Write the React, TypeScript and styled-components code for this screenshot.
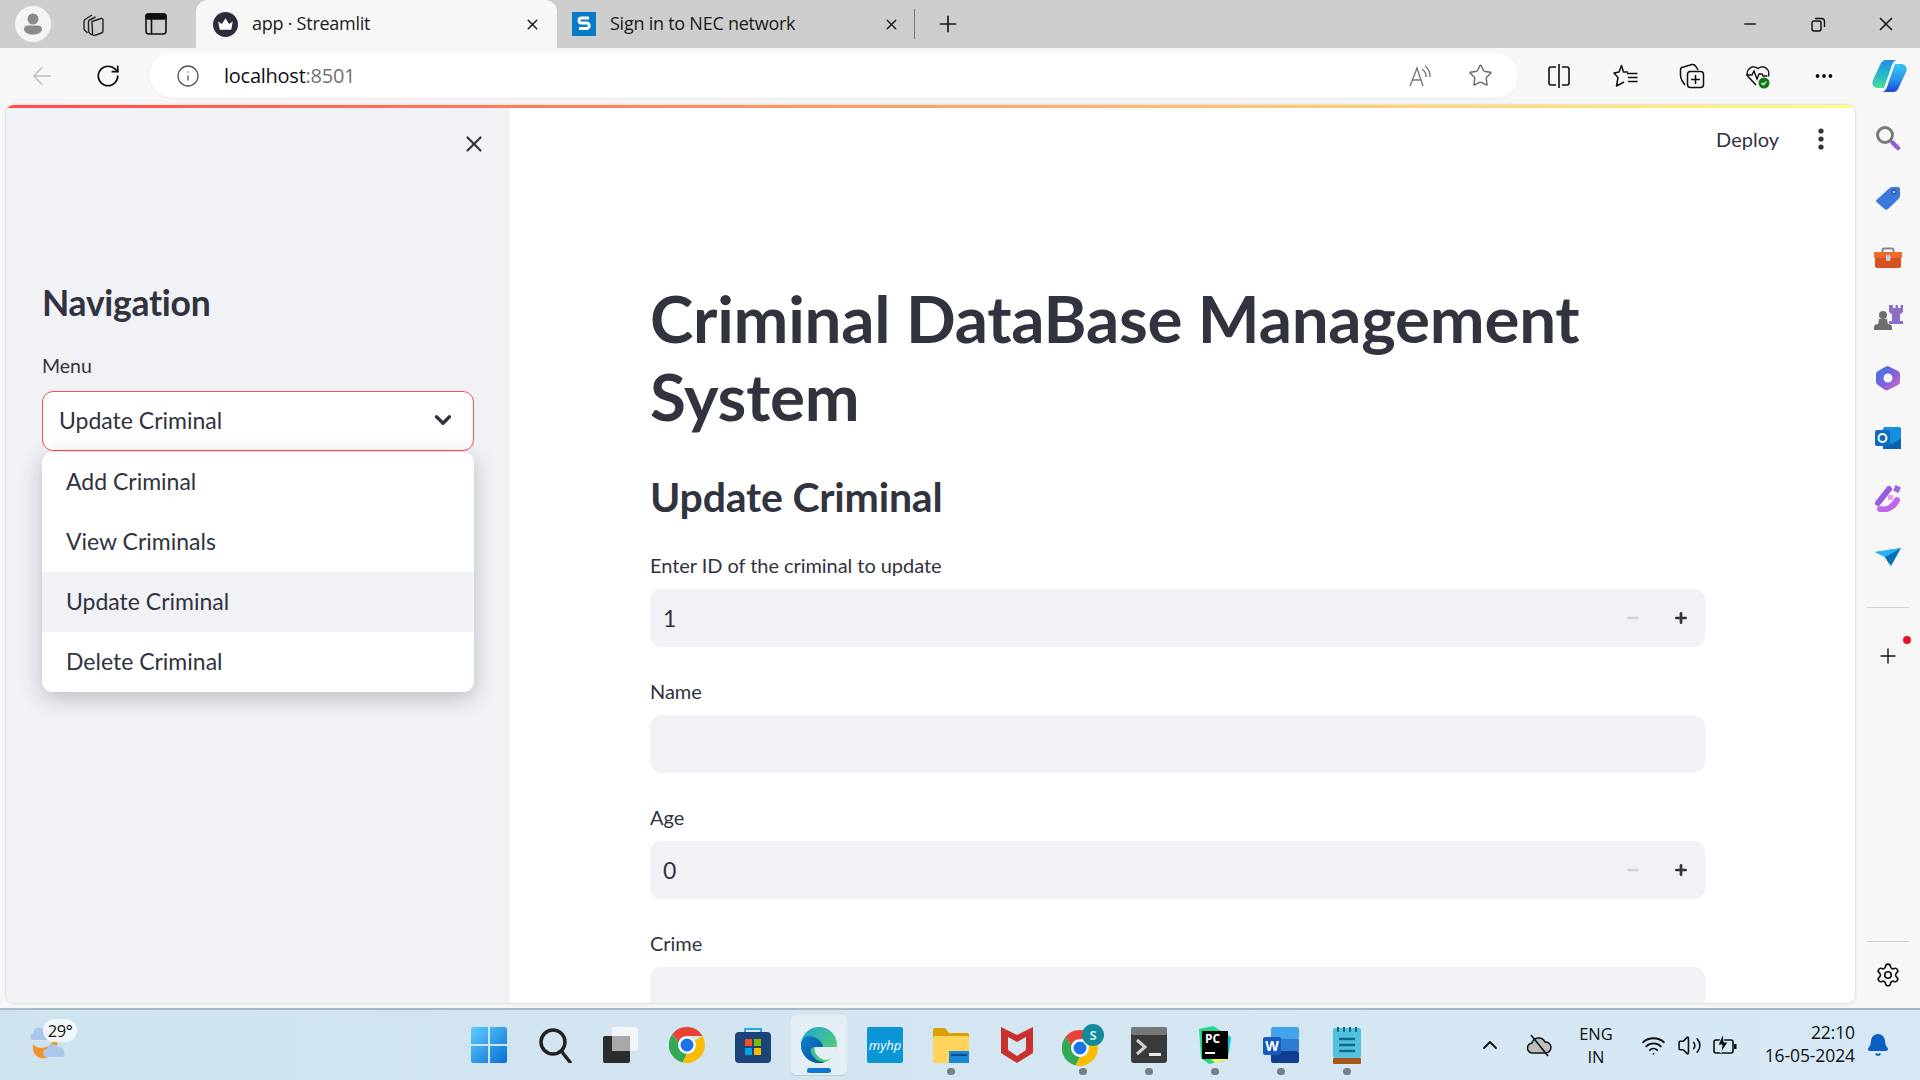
import React from "react";
import styled, { createGlobalStyle } from "styled-components";
import { ArrowLeft, Bell, ChevronDown, ChevronUp, Info, Minus, MoreHorizontal, Plus, RotateCw, Settings, Star, Volume2, Wifi, X } from "lucide-react";

const Global = createGlobalStyle`
  html, body { margin: 0; padding: 0; background: #f7f7f7; }
  * { box-sizing: border-box; }
`;
const Screen = styled.div`
  width: 1920px; height: 1080px; overflow: hidden; display: flex; flex-direction: column;
  font-family: "Lato", "Liberation Sans", sans-serif; color: #31333f; background: #f7f7f7;
`;
const TabStrip = styled.div`
  height: 48px; flex: none; background: #cdcdcd; display: flex; align-items: center; padding-left: 15px;
  font-family: "Open Sans", sans-serif; color: #1a1a1a;
`;
const Slot = styled.div<{ $ml?: number; $w?: number }>`
  display: flex; align-items: center; justify-content: center; flex: none;
  margin-left: ${p => p.$ml ?? 0}px; width: ${p => (p.$w ? `${p.$w}px` : "auto")};
`;
const Tab = styled.div<{ $active?: boolean; $w: number; $ml?: number; $pl: number; $pr: number }>`
  width: ${p => p.$w}px; height: 48px; flex: none; display: flex; align-items: center;
  margin-left: ${p => p.$ml ?? 0}px; padding: 0 ${p => p.$pr}px 0 ${p => p.$pl}px; gap: 14px;
  background: ${p => (p.$active ? "#f7f7f7" : "transparent")};
  border-radius: 12px 12px 0 0;
`;
const TabTitle = styled.span`
  flex: 1; font-size: 18px; line-height: 46px; height: 48px; letter-spacing: -0.25px; white-space: nowrap;
`;
const TabSep = styled.div`
  width: 1px; height: 30px; background: #777; margin-left: 11px; flex: none;
`;
const WindowControls = styled.div`
  margin-left: auto; display: flex;
`;
const Toolbar = styled.div`
  height: 56px; flex: none; background: #f7f7f7; display: flex; align-items: center; padding-left: 24px;
`;
const AddressBar = styled.div`
  width: 1368px; height: 45px; margin-left: 24px; background: #fff; border-radius: 22px; flex: none;
  display: flex; align-items: center; padding: 0 8px 0 26px; margin-top: -1px;
  box-shadow: 0 1px 2px rgba(0,0,0,.05);
`;
const Url = styled.span`
  margin-left: 24px; font-family: "Open Sans", sans-serif; font-size: 20px; letter-spacing: -0.25px; color: #111; flex: 1;
  span { color: #707070; }
`;
const Body = styled.div`
  flex: 1; min-height: 0; display: flex;
`;
const PageFrame = styled.div`
  width: 1849px; margin: 1px 0 5px 6px; flex: none; background: #fff; border-radius: 8px; overflow: hidden;
  position: relative; display: flex; flex-direction: column; box-shadow: 0 0 3px rgba(0,0,0,.22);
`;
const Decoration = styled.div`
  height: 3px; flex: none; background: linear-gradient(90deg, #ff4b4b, #fffd80);
`;
const Columns = styled.div`
  flex: 1; min-height: 0; display: flex;
`;
const Sidebar = styled.aside`
  width: 504px; flex: none; background: #f0f2f6; padding: 0 36px; position: relative;
`;
const SidebarClose = styled.div`
  display: flex; justify-content: flex-end; padding-top: 23px; margin-right: -13px; color: #31333f;
`;
const NavHeading = styled.h2`
  margin: 123px 0 0; font-size: 35.5px; line-height: 46px; font-weight: 700; letter-spacing: -0.3px;
`;
const MenuLabel = styled.div`
  margin: 26px 0 0; font-size: 19.5px; line-height: 28px;
`;
const SelectWrap = styled.div`
  position: relative; margin-top: 11px;
`;
const SelectBox = styled.div`
  height: 60px; background: #fff; border: 1.5px solid #ff4b4b; border-radius: 11px; display: flex; align-items: center;
  padding: 0 17px 2px 16px; font-size: 23px; justify-content: space-between;
`;
const Dropdown = styled.div`
  position: absolute; top: 61px; left: 0; right: 0; background: #fff; border-radius: 11px; overflow: hidden;
  box-shadow: 0 6px 22px rgba(40,45,60,.28);
`;
const Option = styled.div<{ $active?: boolean }>`
  height: 60px; display: flex; align-items: center; padding: 0 0 2px 24px; font-size: 23px;
  background: ${p => (p.$active ? "#f0f2f6" : "#fff")};
`;
const Main = styled.main`
  flex: 1; min-width: 0; padding: 0 150px 0 140px; overflow: hidden; position: relative;
`;
const MainHeader = styled.header`
  position: absolute; top: 19px; right: 29px; display: flex; align-items: center; gap: 37px; font-size: 20px;
`;
const Title = styled.h1`
  margin: 171px 0 0; font-size: 65.5px; line-height: 78px; font-weight: 700; letter-spacing: -0.25px; width: 1000px;
`;
const SubTitle = styled.h2`
  margin: 33px 0 0; font-size: 41px; line-height: 58px; font-weight: 700; letter-spacing: -0.2px;
`;
const Fields = styled.div`
  margin-top: 25px; display: flex; flex-direction: column;
`;
const Field = styled.div`
  height: 126px; display: flex; flex-direction: column;
`;
const FieldLabel = styled.label`
  font-size: 20px; line-height: 28px; height: 38px; letter-spacing: -0.05px;
`;
const Input = styled.div`
  height: 58px; background: #f0f2f6; border-radius: 11px; display: flex; align-items: center; padding-left: 13px; font-size: 23px; flex: none;
`;
const Steppers = styled.div`
  margin-left: auto; display: flex;
`;
const StepSlot = styled.div<{ $muted?: boolean }>`
  width: 48px; display: flex; justify-content: center; color: ${p => (p.$muted ? "#cdd1db" : "#31333f")};
`;
const Rail = styled.nav`
  flex: 1; display: flex; flex-direction: column; align-items: center; padding-top: 4px; position: relative;
`;
const RailItem = styled.div<{ $mt?: number }>`
  height: 60px; width: 100%; flex: none; display: flex; align-items: center; justify-content: center; position: relative;
  margin-top: ${p => p.$mt ?? 0}px;
`;
const RailRule = styled.div<{ $mt?: number }>`
  width: 42px; height: 1px; background: #cfcfcf; flex: none; margin-top: ${p => p.$mt ?? 0}px;
`;
const RedDot = styled.div`
  position: absolute; width: 8px; height: 8px; border-radius: 50%; background: #e81123; right: 9px; top: 10px;
`;
const RailSpacer = styled.div`
  flex: 1;
`;
const RailFoot = styled.div`
  height: 66px; width: 100%; flex: none; display: flex; align-items: center; justify-content: center;
`;
const Taskbar = styled.footer`
  height: 72px; flex: none; background: linear-gradient(90deg, #cfe3ee, #d6e8f3); border-top: 2px solid #a9b9c2;
  display: flex; align-items: center; position: relative; padding-left: 30px;
`;
const Weather = styled.div`
  width: 48px; height: 44px; position: relative; flex: none; margin-top: -10px;
`;
const TempBadge = styled.div`
  position: absolute; left: 13px; top: 1px; width: 34px; height: 23px; border-radius: 12px; background: rgba(244,248,250,.92);
  font-family: "Open Sans", sans-serif; font-size: 16.5px; letter-spacing: -0.4px; line-height: 23px; text-align: center; color: #111;
`;
const Apps = styled.div`
  margin-left: 378px; display: flex; align-items: center; margin-top: -1px;
`;
const AppSlot = styled.div<{ $active?: boolean }>`
  width: 66px; height: 60px; display: flex; align-items: center; justify-content: center; position: relative; flex: none;
  ${p => p.$active ? `&::before { content: ""; position: absolute; left: 5px; right: 5px; top: 0; bottom: 0; background: #e4eff5; border-radius: 5px; box-shadow: 0 1px 0 #b9cbd6; }` : ""}
  svg { position: relative; }
`;
const RunDot = styled.i<{ $on?: boolean }>`
  position: absolute; left: 50%; transform: translateX(-50%);
  width: ${p => (p.$on ? "24px" : "8px")}; height: ${p => (p.$on ? "5px" : "7px")}; border-radius: 4px;
  background: ${p => (p.$on ? "#0a78d4" : "#777f85")}; bottom: ${p => (p.$on ? "2px" : "0")};
`;
const Tray = styled.div`
  position: absolute; right: 0; top: 0; bottom: 0; width: 465px; display: flex; align-items: center; color: #111;
  font-family: "Open Sans", sans-serif;
`;
const Lang = styled.div`
  font-size: 16.5px; line-height: 23px; text-align: center; width: 50px; margin-left: 10px; flex: none;
`;
const Clock = styled.div`
  font-size: 17.5px; line-height: 23px; letter-spacing: -0.1px; text-align: right; width: 100px; margin-left: 12px; flex: none; white-space: nowrap; margin-top: -2px;
  display: flex; flex-direction: column; align-items: flex-end;
`;

const Crown = () => (
  <svg width="25" height="25" viewBox="0 0 24 24"><circle cx="12" cy="12" r="12" fill="#2b2d3a"/><path d="M5 9l3.5 2.5L12 6l3.5 5.5L19 9l-1.5 8h-11z" fill="#fff"/></svg>
);
const SFav = () => (
  <svg width="24" height="24" viewBox="0 0 24 24"><rect width="24" height="24" fill="#0a7cc7"/><path d="M17 6H9.5a2 2 0 0 0 0 5h5a2.2 2.2 0 0 1 0 5.5H7" fill="none" stroke="#fff" strokeWidth="3"/></svg>
);
const Avatar = () => (
  <svg width="36" height="36" viewBox="0 0 36 36"><circle cx="18" cy="18" r="18" fill="#f4f4f4"/><circle cx="18" cy="13" r="5.5" fill="#8a8a8a"/><path d="M9 23c0-2.500 2-3.500 4.500-3.500h9c2.500 0 4.500 1 4.500 3.500 0 3.500-4 5.500-9 5.500s-9-2-9-5.500z" fill="#8a8a8a"/></svg>
);
const CollectionsTab = () => (
  <svg width="26" height="24" viewBox="0 0 26 24" fill="none" stroke="#222" strokeWidth="1.4" strokeLinejoin="round">
    <path d="M13 9.500l9-3a1.500 1.500 0 0 1 2 1.500v11a2 2 0 0 1-1.500 2l-7 2.500a1.500 1.500 0 0 1-2-1.500z"/>
    <path d="M9.500 9.500a2 2 0 0 1 1-1.500l6-3M13 23l-2-1.500a3 3 0 0 1-1.500-2.500V9.500"/>
    <path d="M5 9.500a2.500 2.500 0 0 1 1-2l7-4.500M8.500 21L6 18.500a3 3 0 0 1-1-2.500V9.500"/>
  </svg>
);
const VerticalTab = () => (
  <svg width="22" height="22" viewBox="0 0 22 22" fill="none" stroke="#111" strokeWidth="1.6"><rect x="1" y="1" width="20" height="20" rx="3"/><rect x="1" y="1" width="20" height="5" rx="2" fill="#111"/><path d="M6.500 6v15"/></svg>
);
const Restore = () => (
  <svg width="16" height="16" viewBox="0 0 16 16" fill="none" stroke="#111" strokeWidth="1.4"><rect x="2" y="5" width="9" height="10" rx="2"/><path d="M5 2.500h6.500a3 3 0 0 1 3 3V11"/></svg>
);
const ReadAloud = () => (
  <svg width="26" height="26" viewBox="0 0 26 26" fill="none" stroke="#777" strokeWidth="1.4"><path d="M3 23L10 5l6 18M5.500 17h9"/><path d="M15 6a9 9 0 0 1 4 8M18 3a13 13 0 0 1 5 11"/></svg>
);
const Split = () => (
  <svg width="26" height="26" viewBox="0 0 26 26" fill="none" stroke="#111" strokeWidth="1.6"><path d="M13 1v24M10 4H5a2 2 0 0 0-2 2v14a2 2 0 0 0 2 2h5M16 4h5a2 2 0 0 1 2 2v14a2 2 0 0 1-2 2h-5"/></svg>
);
const FavList = () => (
  <svg width="26" height="24" viewBox="0 0 26 24" fill="none" stroke="#111" strokeWidth="1.5" strokeLinejoin="round"><path d="M15 8h-4.500L8.500 1.500 6 8l-5 1 4 4.500L3.500 22l7.500-4"/><path d="M14 9.500h10.500M15 13.500h9.500M15 17.500h9.500"/></svg>
);
const CollectionsBtn = () => (
  <svg width="26" height="26" viewBox="0 0 26 26" fill="none" stroke="#111" strokeWidth="1.5" strokeLinejoin="round"><rect x="8.500" y="8.500" width="16" height="16" rx="3"/><path d="M16.500 12v9M12 16.500h9"/><path d="M6 22l-3-4.500C2 16 1.500 14 1.500 12V7a3 3 0 0 1 3-3L13 1.500c2-.5 3 .5 4 2L19 7"/></svg>
);
const Health = () => (
  <svg width="28" height="28" viewBox="0 0 28 28"><path d="M12 23L4 14.500a6.500 6.500 0 0 1 10-8 6.500 6.500 0 0 1 10 8" fill="none" stroke="#111" strokeWidth="1.5"/><path d="M2 13h6l2-4 3 8 2-5h3l1 2h4" fill="none" stroke="#111" strokeWidth="1.4"/><circle cx="20" cy="21" r="5.500" fill="#0f7b0f"/><path d="M17.500 21l1.800 1.800 3-3.200" stroke="#fff" fill="none" strokeWidth="1.300"/></svg>
);
const Copilot = () => (
  <svg width="36" height="34" viewBox="0 0 36 34">
    <defs>
      <linearGradient id="c1" x1="0" y1="0" x2="0" y2="1"><stop offset="0" stopColor="#1f8fe6"/><stop offset=".55" stopColor="#27b9c9"/><stop offset="1" stopColor="#48dd9b"/></linearGradient>
      <linearGradient id="c2" x1="0" y1="0" x2="0" y2="1"><stop offset="0" stopColor="#33c7f5"/><stop offset=".55" stopColor="#2a93ea"/><stop offset="1" stopColor="#1b47d6"/></linearGradient>
    </defs>
    <path d="M26 1H15c-3 0-5 2-6 5L2 21c-2 5 1 8 5 8h6l7-20c1-4 3-8 6-8z" fill="url(#c1)"/>
    <path d="M11 33h11c3 0 5-2 6-5l7-15c2-5-1-8-5-8h-6l-7 20c-1 4-3 8-6 8z" fill="url(#c2)"/>
  </svg>
);
const Magnifier = () => (
  <svg width="26" height="26" viewBox="0 0 26 26" fill="none"><circle cx="10" cy="10" r="7.500" stroke="#7a7a7a" strokeWidth="3"/><path d="M15 15l2 2" stroke="#7a7a7a" strokeWidth="3"/><path d="M18 18l5 5" stroke="#8f5fd0" strokeWidth="4.500" strokeLinecap="round"/></svg>
);
const PriceTag = () => (
  <svg width="26" height="26" viewBox="0 0 26 26"><path d="M1.500 15L14 3.500C15 2.500 16 2 17 2h6c1.500 0 2 1 2 2v7c0 1-.5 2-1.500 3L13 24c-1 1-2.500 1-3.500 0l-8-7c-.6-.6-.6-1.400 0-2z" fill="#3f78dc"/><circle cx="19" cy="7" r="2.500" fill="#1d4aa8"/><circle cx="19" cy="7" r="1.200" fill="#e6eefc"/></svg>
);
const Toolbox = () => (
  <svg width="28" height="22" viewBox="0 0 28 22"><path d="M8.500 6V3a1.500 1.500 0 0 1 1.500-1.500h8A1.500 1.500 0 0 1 19.500 3v3" fill="none" stroke="#8a8a8a" strokeWidth="2"/><rect y="5" width="28" height="6" fill="#ea6a2f"/><path d="M1 11h26v8a2 2 0 0 1-2 2H3a2 2 0 0 1-2-2z" fill="#d5511d"/><rect x="12" y="8" width="4.500" height="6" rx="1" fill="#c4ccd2"/></svg>
);
const Chess = () => (
  <svg width="30" height="26" viewBox="0 0 30 26"><path d="M17 0h3v3h2.500V0H25v3h2.500V0H30v7l-3 2.500V16h3v3H16v-3h3V9.500L16 7V0z" fill="#8b6fc7"/><circle cx="10" cy="10" r="4" fill="#6e6e6e"/><path d="M6 14h8l1 6H5zM1 22c0-2 2-3 4-3h10c2 0 4 1 4 3v3H1z" fill="#6e6e6e"/></svg>
);
const M365 = () => (
  <svg width="26" height="26" viewBox="0 0 26 26">
    <defs><linearGradient id="m1" x1="0" y1="0" x2="1" y2="1"><stop offset="0" stopColor="#2f7ae0"/><stop offset=".6" stopColor="#8b5fd8"/><stop offset="1" stopColor="#e06fc0"/></linearGradient></defs>
    <path d="M13 1l10 5c1 .5 2 2 2 3v8c0 1-1 2.500-2 3l-10 5c-1 .5-2 .5-3 0L3 20c-1-.5-2-2-2-3V9c0-1 1-2.500 2-3l7-4c1-.5 2-.5 3-1z" fill="url(#m1)"/><circle cx="13" cy="13" r="4.500" fill="#f7f7f7"/>
  </svg>
);
const Outlook = () => (
  <svg width="26" height="26" viewBox="0 0 26 26"><rect x="8" y="2" width="18" height="22" rx="2" fill="#1490df"/><path d="M8 13l9 6 9-6v11H8z" fill="#0a64ad"/><rect y="5" width="15" height="16" rx="2" fill="#0f6cbd"/><circle cx="7.500" cy="13" r="4" fill="none" stroke="#fff" strokeWidth="2"/></svg>
);
const Magnet = () => (
  <svg width="28" height="28" viewBox="0 0 28 28"><path d="M6 25c6 2 14-2 17-9" fill="none" stroke="#c066e8" strokeWidth="6" strokeLinecap="round"/><path d="M4 19L15 5" stroke="#9b5be0" strokeWidth="6" strokeLinecap="round"/><rect x="20" y="2" width="6" height="6" transform="rotate(25 23 5)" fill="#a066e0"/><rect x="14" y="11" width="5" height="5" fill="#e6a0f0"/></svg>
);
const Send = () => (
  <svg width="26" height="20" viewBox="0 0 26 20"><path d="M0 4l26-4-12 16-4-7z" fill="#1c9be6"/><path d="M10 9l16-9-10 18z" fill="#0b6fb8"/><path d="M0 4l10 5 16-9z" fill="#27b3f2"/></svg>
);
const WeatherArt = () => (
  <svg width="38" height="44" viewBox="0 0 38 44">
    <path d="M2 22a4 4 0 0 1 1-7 6 6 0 0 1 10-4 5 5 0 0 1 3 11z" fill="#a9c6ee"/>
    <path d="M20 22h7v10h-7z" fill="#f7d48a"/>
    <path d="M3 26c5 6 14 5 20-2 3-2 5 0 4 4-2 9-11 15-19 11-4-2-6-8-5-13z" fill="#f0932b"/>
    <path d="M17 39a4 4 0 0 1 0-8 6 6 0 0 1 11-2 5 5 0 0 1 6 5 4 4 0 0 1-1 5z" fill="#a9c8ec"/>
  </svg>
);
const WinLogo = () => (
  <svg width="36" height="36" viewBox="0 0 36 36">
    <defs><linearGradient id="w1" x1="0" y1="0" x2="1" y2="1"><stop offset="0" stopColor="#5ecdfb"/><stop offset="1" stopColor="#0a6fd6"/></linearGradient></defs>
    <path d="M0 2a2 2 0 0 1 2-2h15v17H0zM19 0h15a2 2 0 0 1 2 2v15H19zM0 19h17v17H2a2 2 0 0 1-2-2zM19 19h17v15a2 2 0 0 1-2 2H19z" fill="url(#w1)"/>
  </svg>
);
const SearchApp = () => (
  <svg width="34" height="36" viewBox="0 0 34 36" fill="none" stroke="#222" strokeWidth="3.500"><circle cx="15" cy="15" r="12"/><path d="M24 25l8 10" strokeLinecap="round"/></svg>
);
const TaskView = () => (
  <svg width="36" height="36" viewBox="0 0 36 36"><rect x="9" y="0" width="26" height="24" rx="2" fill="#f2f4f5"/><rect y="9" width="27" height="27" rx="2" fill="#2c2c2c"/><rect x="9" y="9" width="18" height="15" fill="#a8a8a8"/></svg>
);
const Chrome = () => (
  <svg width="36" height="36" viewBox="0 0 36 36">
    <path d="M18 0a18 18 0 0 1 15.600 9H18a9 9 0 0 0-8.600 6.300L3.400 7A18 18 0 0 1 18 0z" fill="#ea4335"/>
    <path d="M3.400 7l6 8.300A9 9 0 0 0 18 27l-4.500 8.400A18 18 0 0 1 3.400 7z" fill="#34a853"/>
    <path d="M33.600 9a18 18 0 0 1-20.100 26.400L18 27a9 9 0 0 0 7.800-13.500z" fill="#fbbc04"/>
    <circle cx="18" cy="18" r="7.500" fill="#1a73e8" stroke="#fff" strokeWidth="2"/>
  </svg>
);
const StoreApp = () => (
  <svg width="36" height="36" viewBox="0 0 36 36"><path d="M10 6V2h16v4" fill="none" stroke="#28a8ea" strokeWidth="2"/><rect y="5" width="36" height="31" rx="4" fill="#1d4478"/><rect x="10" y="12" width="7" height="7" fill="#f25022"/><rect x="19" y="12" width="7" height="7" fill="#7fba00"/><rect x="10" y="21" width="7" height="7" fill="#00a4ef"/><rect x="19" y="21" width="7" height="7" fill="#ffb900"/></svg>
);
const Edge = () => (
  <svg width="36" height="36" viewBox="0 0 36 36">
    <defs>
      <linearGradient id="e1" x1="0" y1="0" x2="1" y2="1"><stop offset="0" stopColor="#1fa4d8"/><stop offset="1" stopColor="#5fd95a"/></linearGradient>
      <linearGradient id="e2" x1="0" y1="0" x2="1" y2="1"><stop offset="0" stopColor="#0c7fc9"/><stop offset="1" stopColor="#0a4f9c"/></linearGradient>
    </defs>
    <circle cx="18" cy="18" r="18" fill="url(#e1)"/>
    <path d="M0 18C0 9 8 8 13 10c6 2 9 7 9 10H14c-5 0-6 4-2 9 2 3 6 6 12 6-2 1-4 1-6 1C8 36 0 28 0 18z" fill="url(#e2)"/>
    <path d="M20 20h16c0 4-2 8-4 10-3 3-9 4-13 1-4-3-7-8-5-11z" fill="#e4eff5"/>
  </svg>
);
const MyHp = () => (
  <svg width="36" height="36" viewBox="0 0 36 36"><rect width="36" height="36" rx="2" fill="#0a96d6"/><text x="18" y="23" textAnchor="middle" fontFamily="Open Sans, sans-serif" fontStyle="italic" fontSize="13" fill="#fff">myhp</text></svg>
);
const Explorer = () => (
  <svg width="36" height="36" viewBox="0 0 36 36"><path d="M0 3a2 2 0 0 1 2-2h10l4 5h18a2 2 0 0 1 2 2v4H0z" fill="#dba000"/><rect y="9" width="36" height="27" rx="2" fill="#ffd45c"/><rect x="16" y="24" width="20" height="12" fill="#1a86d6"/><rect x="18" y="27" width="16" height="2" fill="#0a4f8f"/></svg>
);
const McAfee = () => (
  <svg width="32" height="36" viewBox="0 0 32 36"><path d="M0 0l16 8 16-8v26L16 36 0 26zM7 10v13l9 6 9-6V10l-9 5z" fill="#c8312d" fillRule="evenodd"/></svg>
);
const ChromeBadge = () => (
  <svg width="42" height="42" viewBox="0 0 42 42"><g transform="translate(0 6)"><path d="M18 0a18 18 0 0 1 15.600 9H18a9 9 0 0 0-8.600 6.300L3.400 7A18 18 0 0 1 18 0z" fill="#ea4335"/><path d="M3.400 7l6 8.300A9 9 0 0 0 18 27l-4.500 8.400A18 18 0 0 1 3.400 7z" fill="#34a853"/><path d="M33.600 9a18 18 0 0 1-20.100 26.400L18 27a9 9 0 0 0 7.800-13.500z" fill="#fbbc04"/><circle cx="18" cy="18" r="7.500" fill="#1a73e8" stroke="#fff" strokeWidth="2"/></g><circle cx="31" cy="11" r="11" fill="#138a9c"/><text x="31" y="16" textAnchor="middle" fontFamily="Open Sans, sans-serif" fontWeight="700" fontSize="13" fill="#bfeaf0">S</text></svg>
);
const Terminal = () => (
  <svg width="36" height="36" viewBox="0 0 36 36"><rect width="36" height="36" rx="3" fill="#3a3a3a"/><rect width="36" height="8" rx="2" fill="#777"/><path d="M6 13l8 7-8 7" fill="none" stroke="#d0d0d0" strokeWidth="3"/><rect x="18" y="26" width="12" height="3" fill="#e8e8e8"/></svg>
);
const PyCharm = () => (
  <svg width="36" height="40" viewBox="0 0 36 40"><path d="M2 4l14-3 8 5 10 6-2 16-6 8-14 3-8-6z" fill="#21d789"/><path d="M24 6l10 8-4 16z" fill="#07c3f2"/><path d="M10 30l16-4 6 8-14 4z" fill="#fcf84a"/><rect x="5" y="6" width="26" height="28" fill="#000"/><text x="8" y="18" fontFamily="Open Sans, sans-serif" fontWeight="700" fontSize="12" fill="#fff">PC</text><rect x="8" y="27" width="10" height="2" fill="#fff"/></svg>
);
const Word = () => (
  <svg width="36" height="36" viewBox="0 0 36 36"><rect x="8" width="28" height="12" rx="2" fill="#41a5ee"/><rect x="8" y="12" width="28" height="12" fill="#2b7cd3"/><rect x="8" y="24" width="28" height="12" rx="2" fill="#103f91"/><rect x="0" y="10" width="18" height="18" rx="2" fill="#185abd"/><text x="9" y="24" textAnchor="middle" fontFamily="Open Sans, sans-serif" fontWeight="700" fontSize="14" fill="#fff">W</text></svg>
);
const Notes = () => (
  <svg width="28" height="38" viewBox="0 0 28 38"><rect y="2" width="28" height="30" rx="2" fill="#53c1de"/><rect y="32" width="28" height="6" rx="1" fill="#a9561e"/><path d="M5 1v5M11 1v5M17 1v5M23 1v5" stroke="#0a6a88" strokeWidth="2"/><path d="M6 13h16M6 19h16M6 25h16" stroke="#0a6a88" strokeWidth="2.500"/></svg>
);
const CloudOff = () => (
  <svg width="26" height="24" viewBox="0 0 26 24" fill="none"><path d="M7 20a5 5 0 0 1-1-10 7 7 0 0 1 13-1 5.500 5.500 0 0 1 1 11z" fill="#bdbdbd" stroke="#111" strokeWidth="1.500"/><path d="M5 2l17 21" stroke="#111" strokeWidth="1.600"/></svg>
);
const BatteryIcon = () => (
  <svg width="26" height="26" viewBox="0 0 26 26" fill="none"><rect x="2" y="8" width="19" height="13" rx="2" stroke="#111" strokeWidth="1.600"/><rect x="22" y="12" width="2.500" height="5" fill="#111"/><path d="M11 2L6 13h4l-1 8 7-11h-4z" fill="#111" stroke="#d6e8f3" strokeWidth="1"/></svg>
);

const options = ["Add Criminal", "View Criminals", "Update Criminal", "Delete Criminal"];
const railIcons = [<Magnifier />, <PriceTag />, <Toolbox />, <Chess />, <M365 />, <Outlook />, <Magnet />, <Send />];
const apps: { icon: React.ReactNode; dot?: boolean; on?: boolean }[] = [
  { icon: <WinLogo /> }, { icon: <SearchApp /> }, { icon: <TaskView /> }, { icon: <Chrome /> }, { icon: <StoreApp /> },
  { icon: <Edge />, on: true }, { icon: <MyHp /> }, { icon: <Explorer />, dot: true }, { icon: <McAfee /> },
  { icon: <ChromeBadge />, dot: true }, { icon: <Terminal />, dot: true }, { icon: <PyCharm />, dot: true },
  { icon: <Word />, dot: true }, { icon: <Notes />, dot: true },
];

const NumberField = ({ label, value }: { label: string; value: string }) => (
  <Field>
    <FieldLabel>{label}</FieldLabel>
    <Input>
      {value}
      <Steppers>
        <StepSlot $muted><Minus size={16} strokeWidth={3.5} /></StepSlot>
        <StepSlot><Plus size={16} strokeWidth={4} /></StepSlot>
      </Steppers>
    </Input>
  </Field>
);
const TextField = ({ label }: { label: string }) => (
  <Field>
    <FieldLabel>{label}</FieldLabel>
    <Input />
  </Field>
);

export default function App() {
  return (
    <Screen>
      <Global />
      <TabStrip>
        <Slot><Avatar /></Slot>
        <Slot $ml={28}><CollectionsTab /></Slot>
        <Slot $ml={40}><VerticalTab /></Slot>
        <Tab $active $w={361} $ml={29} $pl={17} $pr={16}>
          <Crown />
          <TabTitle>app · Streamlit</TabTitle>
          <X size={17} strokeWidth={2} />
        </Tab>
        <Tab $w={346} $pl={15} $pr={3}>
          <SFav />
          <TabTitle>Sign in to NEC network</TabTitle>
          <X size={17} strokeWidth={2} />
        </Tab>
        <TabSep />
        <Slot $ml={20}><Plus size={26} strokeWidth={1.6} /></Slot>
        <WindowControls>
          <Slot $w={68}><Minus size={18} strokeWidth={2} /></Slot>
          <Slot $w={68}><Restore /></Slot>
          <Slot $w={68}><X size={22} strokeWidth={1.8} /></Slot>
        </WindowControls>
      </TabStrip>
      <Toolbar>
        <Slot $w={36}><ArrowLeft size={28} strokeWidth={1.2} color="#bdbdbd" /></Slot>
        <Slot $w={36} $ml={30}><RotateCw size={26} strokeWidth={1.6} color="#111" /></Slot>
        <AddressBar>
          <Info size={24} strokeWidth={1.3} color="#555" />
          <Url>localhost<span>:8501</span></Url>
          <Slot $w={60}><ReadAloud /></Slot>
          <Slot $w={60}><Star size={25} strokeWidth={1.3} color="#666" /></Slot>
        </AddressBar>
        <Slot $w={66} $ml={8}><Split /></Slot>
        <Slot $w={67}><FavList /></Slot>
        <Slot $w={66}><CollectionsBtn /></Slot>
        <Slot $w={66}><Health /></Slot>
        <Slot $w={66}><MoreHorizontal size={22} strokeWidth={2.2} color="#111" /></Slot>
        <Slot $w={66} $ml={-1}><Copilot /></Slot>
      </Toolbar>
      <Body>
        <PageFrame>
          <Decoration />
          <Columns>
            <Sidebar>
              <SidebarClose><X size={26} strokeWidth={2} /></SidebarClose>
              <NavHeading>Navigation</NavHeading>
              <MenuLabel>Menu</MenuLabel>
              <SelectWrap>
                <SelectBox>
                  Update Criminal
                  <ChevronDown size={26} strokeWidth={3} />
                </SelectBox>
                <Dropdown>
                  {options.map(o => <Option key={o} $active={o === "Update Criminal"}>{o}</Option>)}
                </Dropdown>
              </SelectWrap>
            </Sidebar>
            <Main>
              <MainHeader>
                Deploy
                <svg width="10" height="24" viewBox="0 0 10 24" fill="#31333f"><circle cx="5" cy="4" r="2.600"/><circle cx="5" cy="12" r="2.600"/><circle cx="5" cy="20" r="2.600"/></svg>
              </MainHeader>
              <Title>Criminal DataBase Management System</Title>
              <SubTitle>Update Criminal</SubTitle>
              <Fields>
                <NumberField label="Enter ID of the criminal to update" value="1" />
                <TextField label="Name" />
                <NumberField label="Age" value="0" />
                <TextField label="Crime" />
              </Fields>
            </Main>
          </Columns>
        </PageFrame>
        <Rail>
          {railIcons.map((icon, i) => <RailItem key={i}>{icon}</RailItem>)}
          <RailRule $mt={19} />
          <RailItem $mt={18}><Plus size={24} strokeWidth={1.4} color="#111" /><RedDot /></RailItem>
          <RailSpacer />
          <RailRule />
          <RailFoot><Settings size={26} strokeWidth={1.5} color="#111" /></RailFoot>
        </Rail>
      </Body>
      <Taskbar>
        <Weather><WeatherArt /><TempBadge>29°</TempBadge></Weather>
        <Apps>
          {apps.map((a, i) => (
            <AppSlot key={i} $active={a.on}>
              {a.icon}
              {(a.dot || a.on) && <RunDot $on={a.on} />}
            </AppSlot>
          ))}
        </Apps>
        <Tray>
          <Slot $w={50} $ml={10}><ChevronUp size={24} strokeWidth={1.8} /></Slot>
          <Slot $w={44} $ml={2}><CloudOff /></Slot>
          <Lang>ENG<br />IN</Lang>
          <Slot $w={38} $ml={13}><Wifi size={25} strokeWidth={1.8} /></Slot>
          <Slot $w={35}><Volume2 size={25} strokeWidth={1.5} /></Slot>
          <Slot $w={36}><BatteryIcon /></Slot>
          <Clock><span>22:10</span><span>16-05-2024</span></Clock>
          <Slot $w={40} $ml={3}><Bell size={24} fill="#0a5fc4" color="#0a5fc4" /></Slot>
        </Tray>
      </Taskbar>
    </Screen>
  );
}
